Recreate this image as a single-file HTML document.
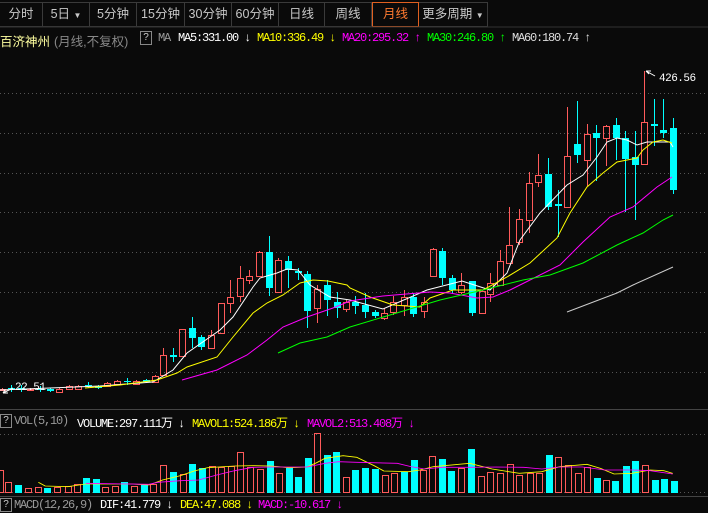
<!DOCTYPE html>
<html><head><meta charset="utf-8">
<style>
body{margin:0;background:#0a0a0a;width:708px;height:513px;overflow:hidden;position:relative;font-family:"Liberation Sans","Noto Sans CJK SC",sans-serif}
.tabs{position:absolute;left:0;top:2px;height:23px;width:488px;border-top:1px solid #3a3a3a;border-bottom:1px solid #3a3a3a}
.tab{position:absolute;top:0;height:23px;line-height:22px;text-align:center;color:#c8c8c8;font-size:12.5px;border-right:1px solid #3a3a3a;box-sizing:border-box}
.act{border:1px solid #e06020;color:#ff7a30}
.t{position:absolute;font-family:"Liberation Mono","Noto Sans CJK SC",monospace;font-size:12px;letter-spacing:-1.2px;white-space:nowrap}
.q{position:absolute;width:10px;height:12px;border:1px solid #888;color:#ccc;font-size:10px;line-height:12px;text-align:center;font-family:"Liberation Sans",sans-serif}
svg{position:absolute;left:0;top:0}
</style></head><body>
<div class="tabs">
<div class="tab" style="left:0;width:43px">分时</div>
<div class="tab" style="left:43px;width:47px">5日 <span style="font-size:8px">▼</span></div>
<div class="tab" style="left:90px;width:47px">5分钟</div>
<div class="tab" style="left:137px;width:48px">15分钟</div>
<div class="tab" style="left:185px;width:47px">30分钟</div>
<div class="tab" style="left:232px;width:47px">60分钟</div>
<div class="tab" style="left:279px;width:46px">日线</div>
<div class="tab" style="left:325px;width:47px">周线</div>
<div class="tab act" style="left:372px;width:47px;top:-1px;height:25px">月线</div>
<div class="tab" style="left:419px;width:69px">更多周期 <span style="font-size:8px">▼</span></div>
</div>
<div class="t" style="left:0;top:31px;font-size:12.5px;letter-spacing:0;color:#ffffa0;font-family:'Liberation Sans','Noto Sans CJK SC',sans-serif">百济神州</div>
<div class="t" style="left:54px;top:31px;font-size:12.5px;letter-spacing:0;color:#888;font-family:'Liberation Sans','Noto Sans CJK SC',sans-serif">(月线,不复权)</div>
<div class="q" style="left:140px;top:31px">?</div>
<div class="t" style="left:158px;top:31px;color:#999">MA</div>
<div class="t" style="left:178px;top:31px;color:#fff">MA5:331.00 ↓</div>
<div class="t" style="left:257px;top:31px;color:#ffff00">MA10:336.49 ↓</div>
<div class="t" style="left:342px;top:31px;color:#ff00ff">MA20:295.32 ↑</div>
<div class="t" style="left:427px;top:31px;color:#00ff00">MA30:246.80 ↑</div>
<div class="t" style="left:512px;top:31px;color:#ddd">MA60:180.74 ↑</div>

<div class="q" style="left:0;top:414px">?</div>
<div class="t" style="left:14px;top:414px;color:#999">VOL(5,10)</div>
<div class="t" style="left:77px;top:414px;color:#fff">VOLUME:297.111万 ↓</div>
<div class="t" style="left:192px;top:414px;color:#ffff00">MAVOL1:524.186万 ↓</div>
<div class="t" style="left:307px;top:414px;color:#ff00ff">MAVOL2:513.408万 ↓</div>

<div class="q" style="left:0;top:498px">?</div>
<div class="t" style="left:14px;top:498px;color:#999">MACD(12,26,9)</div>
<div class="t" style="left:100px;top:498px;color:#fff">DIF:41.779 ↓</div>
<div class="t" style="left:180px;top:498px;color:#ffff00">DEA:47.088 ↓</div>
<div class="t" style="left:258px;top:498px;color:#ff00ff">MACD:-10.617 ↓</div>

<svg id="s" width="708" height="513" xmlns="http://www.w3.org/2000/svg">
<line x1="0" y1="27" x2="708" y2="27" stroke="#333"/>
<g stroke="#555" stroke-dasharray="1,3">
<line x1="0" y1="93.5" x2="708" y2="93.5"/><line x1="0" y1="133.5" x2="708" y2="133.5"/>
<line x1="0" y1="173.5" x2="708" y2="173.5"/><line x1="0" y1="212.5" x2="708" y2="212.5"/>
<line x1="0" y1="252.5" x2="708" y2="252.5"/><line x1="0" y1="292.5" x2="708" y2="292.5"/>
<line x1="0" y1="332.5" x2="708" y2="332.5"/><line x1="0" y1="372.5" x2="708" y2="372.5"/>
<line x1="0" y1="434.5" x2="708" y2="434.5"/><line x1="0" y1="492.5" x2="708" y2="492.5"/>
</g>
<line x1="0" y1="409.5" x2="708" y2="409.5" stroke="#444"/>
<line x1="0" y1="496.5" x2="708" y2="496.5" stroke="#444"/>
<g id="cd"></g>
<g fill="none" stroke-width="1">
<polyline stroke="#ffffff" points="0,390 50,388 100,386 153,382 173,370 187,353 220,330 233,317 253,287 260,278 277,273 287,269 298,270 310,285 330,297 350,300 383,309 427,290 462,281 490,290 507,273 520,240 540,213 567,185 583,175 597,157 607,142 617,138 627,140 637,145 647,142 670,142 673,147"/>
<polyline stroke="#ffff00" points="85,388 120,385 157,380 177,373 187,367 217,357 233,337 253,313 267,303 283,295 300,283 313,280 328,281 347,285 350,288 370,297 393,305 420,307 430,298 453,290 483,290 507,277 530,263 557,238 570,213 587,187 603,173 617,162 637,158 643,150 653,142 663,140 672,143"/>
<polyline stroke="#ff00ff" points="182,380 217,370 247,355 267,340 283,327 307,317 333,308 350,301 383,296 430,292 450,293 477,298 493,297 510,290 530,280 560,265 583,242 610,217 633,207 657,187 672,177"/>
<polyline stroke="#00ff00" points="278,353 300,343 327,337 350,327 400,312 440,300 483,290 523,280 550,275 583,263 617,245 643,233 663,220 673,215"/>
<polyline stroke="#cccccc" points="567,312 617,293 633,285 673,267"/>
<g transform="translate(0,405) scale(0.4515,0.3333)">
<polyline stroke="#ffff00" stroke-width="2.5" points="85,232 100,243 150,245 190,237 290,237 330,240 360,225 400,212 430,198 460,188 520,183 560,182 600,183 640,188 680,186 700,174 720,160 760,152 790,157 830,183 850,198 905,200 930,195 960,185 1040,175 1090,192 1150,205 1200,200 1240,185 1300,178 1330,190 1360,207 1400,205 1440,195 1470,197 1490,205"/>
<polyline stroke="#ff00ff" stroke-width="2.5" points="190,235 330,238 350,232 400,227 440,225 480,210 520,197 560,187 600,186 680,186 720,175 750,170 790,172 880,175 910,185 940,192 980,187 1040,187 1100,186 1160,187 1200,192 1240,186 1290,186 1340,195 1400,195 1440,197 1490,207"/>
</g>
</g>
<g stroke="#fff" fill="none">
<path d="M646,71 L655,76 M646,71 l5,0 M646,71 l3,3"/>
<path d="M3,393 L13,388 M3,393 l5,0 M3,393 l2,-3"/>
</g>
<text x="659" y="81" fill="#fff" font-family="Liberation Mono,monospace" font-size="11" letter-spacing="-0.5">426.56</text>
<text x="15" y="390" fill="#fff" font-family="Liberation Mono,monospace" font-size="11" letter-spacing="-0.5">22.51</text>
</svg>
<script>
var R='#ff5a5a',C='#00ffff';
var c=[
[1.5,389,390,388,391,'r'],[11.1,388,389,385,392,'c'],[20.7,388,389,385,392,'c'],[30.4,389,390,388,391,'r'],[40,389,390,386,392,'c'],[49.6,389,391,388,392,'c'],[59.2,389,392,388,393,'r'],[68.8,386,389,385,390,'r'],[78.4,386,389,385,390,'r'],[88,385,386,382,388,'c'],[97.7,386,388,385,389,'c'],[107.3,383,386,382,387,'r'],[116.9,381,384,380,385,'r'],[126.5,381,382,378,385,'c'],[136.1,381,384,380,385,'r'],[145.7,380,382,379,383,'c'],[155.4,376,382,375,383,'r'],
[163,355,375,348,376,'r'],[173,355,357,348,362,'c'],[182,329,356,329,357,'r'],[192,328,338,317,348,'c'],[201,337,347,335,350,'c'],[211,335,348,330,349,'r'],[221,303,333,303,334,'r'],[230,297,303,280,313,'r'],[240,278,296,266,302,'r'],[249,276,280,270,284,'r'],[259,252,276,251,277,'r'],[269,252,288,236,296,'c'],[278,260,292,258,293,'r'],[288,261,270,256,288,'c'],[298,271,273,268,280,'c'],[307,274,311,271,328,'c'],[317,289,308,285,323,'r'],[327,285,300,280,316,'c'],[337,302,308,292,318,'c'],[346,302,309,300,312,'r'],[355,302,306,296,314,'c'],
[365,305,312,293,318,'c'],[375,312,316,310,318,'c'],[384,313,318,308,320,'r'],[393,302,312,296,315,'r'],[404,297,305,290,316,'r'],[413,297,314,293,317,'c'],[424,302,311,297,318,'r'],[433,249,276,248,277,'r'],[442,251,278,248,285,'c'],[452,278,290,275,293,'c'],[461,285,292,273,294,'r'],[472,281,313,281,316,'c'],[482,291,313,290,314,'r'],[490,283,294,273,302,'r'],[500,261,285,250,286,'r'],[509,245,263,207,264,'r'],[519,219,242,209,245,'r'],[529,183,220,172,233,'r'],[538,175,182,154,187,'r'],[548,174,207,158,210,'c'],[558,204,206,190,237,'c'],[567,156,207,107,208,'r'],[577,144,155,101,163,'c'],[587,134,160,124,186,'r'],[596,133,138,125,181,'c'],[606,126,138,125,166,'r'],[616,125,138,118,160,'c'],[625,138,159,131,212,'c'],[635,157,165,131,220,'c'],[644,122,164,71,165,'r'],[654,124,126,99,146,'c'],[663,130,133,99,138,'c'],[673,128,190,118,194,'c']];
var v=[[0,470,'r'],[8,482,'r'],[18,485,'c'],[28,488,'r'],[38,487,'r'],[47,488,'c'],[57,487,'r'],[68,486,'r'],[77,484,'r'],[86,478,'c'],[96,479,'c'],[105,487,'r'],[115,486,'r'],[124,482,'c'],[134,486,'r'],[144,485,'c'],[153,484,'r'],[163,465,'r'],[173,472,'c'],[183,474,'r'],[192,464,'c'],[202,468,'c'],[212,466,'r'],[221,467,'r'],[231,466,'r'],[240,452,'r'],[250,467,'r'],[260,469,'r'],[270,461,'c'],[279,473,'r'],[289,468,'c'],[298,477,'c'],[308,458,'c'],[317,433,'r'],[327,455,'c'],[336,452,'c'],[346,477,'r'],[355,470,'c'],[365,468,'c'],[375,469,'c'],[385,475,'r'],[394,473,'r'],[404,472,'c'],[414,460,'c'],[423,470,'r'],[432,456,'r'],[442,459,'c'],[451,471,'c'],[461,468,'r'],[471,449,'c'],[481,476,'r'],[490,472,'r'],[500,473,'r'],[510,464,'r'],[519,475,'r'],[530,473,'r'],[539,473,'r'],[549,455,'c'],[558,457,'r'],[568,465,'r'],[578,473,'r'],[587,467,'r'],[597,478,'c'],[606,480,'r'],[615,481,'c'],[626,466,'c'],[635,461,'c'],[645,465,'r'],[655,480,'c'],[664,479,'c'],[674,481,'c']];
var h='';
c.forEach(function(a){var x=Math.round(a[0]),col=a[5]=='r'?R:C;
h+='<line x1="'+(x+.5)+'" y1="'+a[3]+'" x2="'+(x+.5)+'" y2="'+a[1]+'" stroke="'+col+'"/>';
h+='<line x1="'+(x+.5)+'" y1="'+a[2]+'" x2="'+(x+.5)+'" y2="'+a[4]+'" stroke="'+col+'"/>';
var hh=Math.max(a[2]-a[1],1);
if(a[5]=='r')h+='<rect x="'+(x-2.5)+'" y="'+(a[1]+.5)+'" width="6" height="'+hh+'" fill="none" stroke="'+R+'"/>';
else h+='<rect x="'+(x-3)+'" y="'+a[1]+'" width="7" height="'+hh+'" fill="'+C+'"/>';});
v.forEach(function(a){var x=Math.round(a[0]);
if(a[2]=='r')h+='<rect x="'+(x-2.5)+'" y="'+(a[1]+.5)+'" width="6" height="'+(492-a[1])+'" fill="none" stroke="'+R+'"/>';
else h+='<rect x="'+(x-3)+'" y="'+a[1]+'" width="7" height="'+(493-a[1])+'" fill="'+C+'"/>';});
document.getElementById('cd').innerHTML=h;
</script>
</body></html>
